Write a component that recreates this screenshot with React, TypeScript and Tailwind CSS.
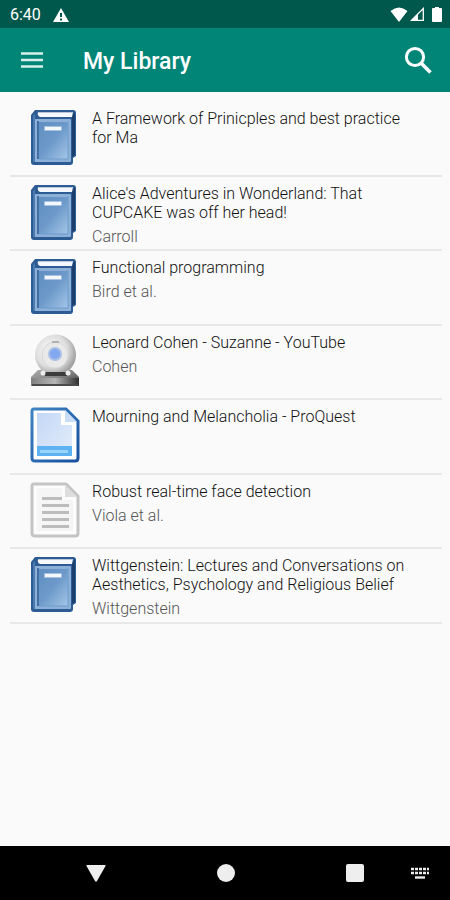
import React from 'react';

type ItemKind = 'book' | 'video' | 'page' | 'article';

interface LibraryItem {
  id: number;
  kind: ItemKind;
  title: string;
  author?: string;
}

const items: LibraryItem[] = [
  { id: 1, kind: 'book', title: 'A Framework of Prinicples and best practice for Ma' },
  { id: 2, kind: 'book', title: "Alice's Adventures in Wonderland: That CUPCAKE was off her head!", author: 'Carroll' },
  { id: 3, kind: 'book', title: 'Functional programming', author: 'Bird et al.' },
  { id: 4, kind: 'video', title: 'Leonard Cohen - Suzanne - YouTube', author: 'Cohen' },
  { id: 5, kind: 'page', title: 'Mourning and Melancholia - ProQuest' },
  { id: 6, kind: 'article', title: 'Robust real-time face detection', author: 'Viola et al.' },
  { id: 7, kind: 'book', title: 'Wittgenstein: Lectures and Conversations on Aesthetics, Psychology and Religious Belief', author: 'Wittgenstein' },
];

const BookIcon = () => (
  <svg viewBox="0 0 50 56" className="w-full" aria-hidden="true">
    <defs>
      <linearGradient id="cover" x1="0" y1="0" x2="1" y2="1">
        <stop offset="0" stopColor="#5f8ec0" />
        <stop offset="0.5" stopColor="#6c99c9" />
        <stop offset="1" stopColor="#a5c6e8" />
      </linearGradient>
    </defs>
    <path d="M5 1h38q3 0 3 3v43l-3 2v4q0 3-3 3H4q-3 0-3-3V6z" fill="#2c5c93" />
    <path d="M42 7l3-4v43l-3 2z" fill="#1d3f6b" />
    <path d="M8 3h35l-1 5H10q-3-1-2-5z" fill="#f4f7fb" />
    <path d="M8 3h35v1H8z" fill="#b9c7d8" />
    <rect x="3" y="10" width="38" height="43" rx="1" fill="#8db0d8" />
    <rect x="7" y="13" width="31" height="37" fill="url(#cover)" />
    <path d="M3 7l2-2v48H3z" fill="#4a7ab0" />
    <path d="M7 12h2v38H7z" fill="#416fa5" />
    <path d="M38 12v38H9" fill="none" stroke="#6f9acb" strokeWidth="1" />
    <rect x="14" y="17" width="18" height="5" rx="1" fill="#a5c2e2" />
    <rect x="15" y="18" width="16" height="3" fill="#f4f8fc" />
  </svg>
);

const VideoIcon = () => (
  <svg viewBox="0 0 50 56" className="w-full" aria-hidden="true">
    <defs>
      <radialGradient id="ball" cx="0.4" cy="0.4" r="0.6">
        <stop offset="0" stopColor="#ffffff" />
        <stop offset="0.65" stopColor="#dedede" />
        <stop offset="1" stopColor="#a2a2a2" />
      </radialGradient>
      <linearGradient id="base" x1="0" y1="0" x2="1" y2="1">
        <stop offset="0" stopColor="#aaaaaa" />
        <stop offset="0.5" stopColor="#858585" />
        <stop offset="1" stopColor="#303030" />
      </linearGradient>
      <linearGradient id="plinth" x1="0" y1="0" x2="1" y2="0">
        <stop offset="0" stopColor="#808080" />
        <stop offset="0.5" stopColor="#b5b5b5" />
        <stop offset="1" stopColor="#2e2e2e" />
      </linearGradient>
    </defs>
    <path d="M8 37h34l7 7v8q0 1-1 1H2q-1 0-1-1v-8z" fill="url(#base)" />
    <path d="M1 45h48v7q0 1-1 1H2q-1 0-1-1z" fill="url(#plinth)" />
    <path d="M2 51h46v2H2z" fill="#4a4a4a" />
    <circle cx="25.500" cy="22" r="20.500" fill="url(#ball)" />
    <circle cx="25" cy="22" r="13" fill="#e9e9e9" stroke="#d8d8d8" />
    <path d="M15 39h22v4H15z" fill="#3c3c3c" />
    <circle cx="13" cy="40" r="2.500" fill="#ededed" />
    <circle cx="38" cy="40" r="2.500" fill="#ededed" />
    <circle cx="25" cy="21" r="7" fill="#a8bfe6" />
    <circle cx="25" cy="21" r="5" fill="#83a8ef" />
    <path d="M22 9h7" stroke="#b0b0b0" strokeWidth="2" />
  </svg>
);

const PageIcon = () => (
  <svg viewBox="0 0 50 56" className="w-full" aria-hidden="true">
    <defs>
      <linearGradient id="sheet" x1="0" y1="0" x2="1" y2="1">
        <stop offset="0" stopColor="#c3d7f5" />
        <stop offset="1" stopColor="#e4edfb" />
      </linearGradient>
      <linearGradient id="edge" x1="0" y1="0" x2="1" y2="1">
        <stop offset="0" stopColor="#3f85c4" />
        <stop offset="1" stopColor="#174f9d" />
      </linearGradient>
    </defs>
    <path d="M4 2h32l12 12v37q0 3-3 3H5q-3 0-3-3V4q0-2 2-2z" fill="#ffffff" stroke="url(#edge)" strokeWidth="3" />
    <path d="M7 6h24v12h11v31H7z" fill="url(#sheet)" />
    <path d="M35 3l12 12H35z" fill="#c9dcf5" />
    <rect x="7" y="39" width="35" height="10" fill="#5fb2f2" />
    <rect x="10" y="43" width="28" height="3" fill="#98d3fc" />
  </svg>
);

const ArticleIcon = () => (
  <svg viewBox="0 0 50 56" className="w-full" aria-hidden="true">
    <path d="M4 2h32l12 12v37q0 3-3 3H5q-3 0-3-3V4q0-2 2-2z" fill="#fcfcfc" stroke="#c4c4c4" strokeWidth="3" />
    <path d="M7 6h25v12h11v31H7z" fill="#f5f5f5" />
    <path d="M35 3l12 12H35z" fill="#dedede" />
    <path d="M12 16.500h20M12 23.500h27M12 30.500h27M12 37.500h27M12 44.500h27" stroke="#bcbcbc" strokeWidth="3" />
  </svg>
);

const icons: Record<ItemKind, React.FC> = {
  book: BookIcon,
  video: VideoIcon,
  page: PageIcon,
  article: ArticleIcon,
};

const StatusBar = () => (
  <div className="flex h-7 items-center justify-between bg-[#00574b] pl-[10px] pr-2 text-white">
    <div className="flex items-center gap-3 pt-[2px]">
      <span className="text-base leading-6">6:40</span>
      <svg viewBox="0 0 16 14" className="h-[14px] w-4" role="img" aria-label="Warning">
        <path d="M8 0l8 14H0z" fill="#ffffff" />
        <path d="M7 5h2v4H7zM7 10.500h2v2H7z" fill="#00574b" />
      </svg>
    </div>
    <div className="flex items-center gap-[2px]">
      <svg viewBox="0 0 18 15" className="h-[15px] w-[18px]" role="img" aria-label="Wi-Fi">
        <path d="M0.500 4Q9-3 17.500 4L9 15z" fill="#ffffff" />
      </svg>
      <svg viewBox="0 0 14 14" className="h-[14px] w-[14px]" role="img" aria-label="Signal">
        <path d="M13.300 1.500v11.800H1.500z" fill="none" stroke="#ffffff" strokeWidth="1.300" />
        <path d="M8 6.500v7H1z" fill="#ffffff" />
      </svg>
      <svg viewBox="0 0 10 15" className="ml-[6px] h-[15px] w-[10px]" role="img" aria-label="Battery">
        <path d="M3 0h4v1h2q1 0 1 1v12q0 1-1 1H1q-1 0-1-1V2q0-1 1-1h2z" fill="#ffffff" />
      </svg>
    </div>
  </div>
);

const Toolbar = () => (
  <header className="flex h-16 items-center bg-[#008577] px-4 text-white">
    <button type="button" aria-label="Open menu" className="flex size-8 items-center justify-center">
      <svg viewBox="0 0 22 16" className="h-4 w-[22px]" aria-hidden="true">
        <path d="M0 1.500h22M0 8h22M0 14.500h22" stroke="#d9eeeb" strokeWidth="2.400" />
      </svg>
    </button>
    <h1 className="ml-[35px] flex-1 pt-1 text-[23px] leading-8 font-medium">My Library</h1>
    <button type="button" aria-label="Search" className="flex size-8 items-center justify-center">
      <svg viewBox="0 0 28 28" className="size-7" aria-hidden="true">
        <circle cx="11" cy="11" r="8.600" fill="none" stroke="#ffffff" strokeWidth="3" />
        <path d="M17 17l9.500 9.500" stroke="#ffffff" strokeWidth="3.600" />
      </svg>
    </button>
  </header>
);

const LibraryRow: React.FC<{ item: LibraryItem }> = ({ item }) => {
  const Icon = icons[item.kind];

  return (
    <li className="flex border-b-2 border-[#e8e8e8] pt-[7px] pr-6 pl-5">
      <div className="w-[50px] shrink-0">
        <Icon />
      </div>
      <div className="ml-3 flex-1 font-light">
        <h2 className="text-base leading-[19px] text-[#111111]">{item.title}</h2>
        {item.author && <p className="mt-[5px] text-base leading-5 text-[#555555]">{item.author}</p>}
      </div>
    </li>
  );
};

const NavigationBar = () => (
  <nav className="flex h-[54px] items-center bg-black pr-5 pl-[86px] text-[#eeeeee]">
    <div className="mr-[46px] flex flex-1 items-center justify-between">
      <button type="button" aria-label="Back">
        <svg viewBox="0 0 20 17" className="h-[17px] w-5" aria-hidden="true">
          <path d="M1 0h18q1 0 0.500 1L11 16q-1 1.500-2 0L0.500 1Q0 0 1 0z" fill="currentColor" />
        </svg>
      </button>
      <button type="button" aria-label="Home" className="size-[18px] rounded-full bg-[#eeeeee]" />
      <button type="button" aria-label="Recent apps" className="size-[18px] rounded-[2px] bg-[#eeeeee]" />
    </div>
    <button type="button" aria-label="Switch keyboard">
      <svg viewBox="0 0 20 12" className="h-3 w-5" aria-hidden="true">
        <path d="M1 2h18M1 6h18" stroke="currentColor" strokeWidth="2.400" strokeDasharray="3 1" />
        <path d="M5 10.500h10" stroke="currentColor" strokeWidth="2.400" />
      </svg>
    </button>
  </nav>
);

export default function App() {
  return (
    <div className="flex min-h-screen flex-col bg-[#fafafa] font-['Roboto',sans-serif]">
      <StatusBar />
      <Toolbar />
      <main className="flex-1 pt-[10px] pr-2 pl-[10px]">
        <ul className="grid min-h-[522px] auto-rows-fr">
          {items.map((item) => (
            <LibraryRow key={item.id} item={item} />
          ))}
        </ul>
      </main>
      <NavigationBar />
    </div>
  );
}
